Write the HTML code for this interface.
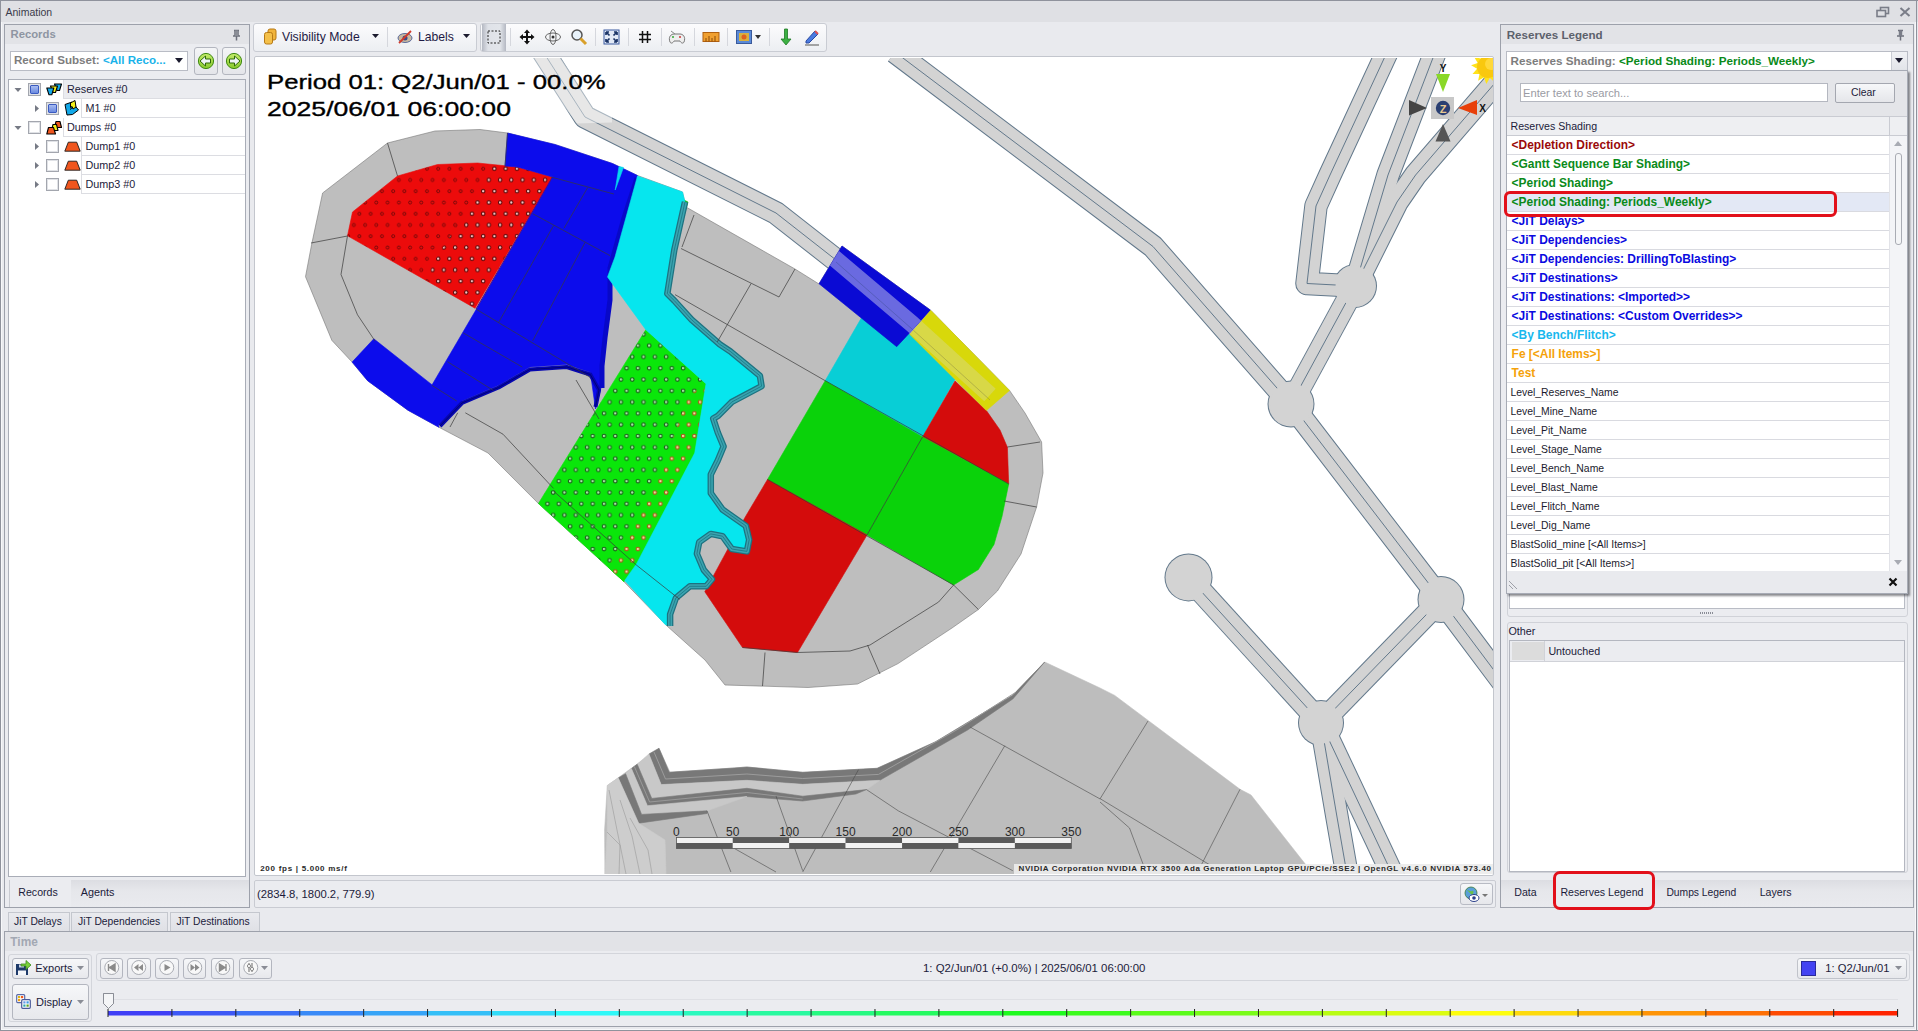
<!DOCTYPE html>
<html><head><meta charset="utf-8">
<style>
*{margin:0;padding:0;box-sizing:border-box}
html,body{width:1918px;height:1031px;overflow:hidden;background:#e9eaee;font-family:"Liberation Sans",sans-serif;color:#1b1b2e}
.a{position:absolute}
.t{position:absolute;white-space:nowrap;line-height:1;font-size:10.6px}
.b{font-weight:bold}
.box{position:absolute;border:1px solid #a7abb5}
</style></head><body>
<div class="a" style="left:0px;top:0px;width:1918px;height:1031px;background:#e9eaee"></div>
<div class="a" style="left:0px;top:0px;width:1918px;height:22px;background:#dfe0e4;border-top:1px solid #8f929c"></div>
<div class="a" style="left:1916px;top:0px;width:1px;height:1031px;background:#8f929c"></div>
<div class="t" style="left:5.5px;top:6.71px;font-size:10.5px;color:#3a3a4a;">Animation</div>
<svg class="a" style="left:1876px;top:6px" width="14" height="12" viewBox="0 0 14 12"><rect x="4.5" y="1.5" width="8" height="6" fill="none" stroke="#7a7d88" stroke-width="1.6"/><rect x="1" y="4.5" width="8.5" height="6" fill="#dfe0e4" stroke="#7a7d88" stroke-width="1.6"/></svg>
<svg class="a" style="left:1899px;top:7px" width="12" height="10" viewBox="0 0 12 10"><path d="M1.5 1 L10.5 9 M10.5 1 L1.5 9" stroke="#7a7d88" stroke-width="2"/></svg>
<div class="a" style="left:0px;top:0px;width:1px;height:1031px;background:#8f929c"></div>
<div class="a" style="left:1px;top:22px;width:1px;height:1008px;background:#f7f8fa"></div>
<div class="a" style="left:0px;top:1030px;width:1918px;height:1px;background:#8f929c"></div>
<div class="a" style="left:1px;top:1029px;width:1915px;height:1px;background:#f7f8fa"></div>
<div class="a" style="left:1915px;top:22px;width:1px;height:1008px;background:#f7f8fa"></div>
<div class="a" style="left:4px;top:24px;width:246px;height:884px;background:#ebecf0;border:1px solid #9da1ab"></div>
<div class="a" style="left:5px;top:25px;width:244px;height:19px;background:#e2e3e7"></div>
<div class="t" style="left:10.5px;top:28.73px;font-size:11.3px;color:#8e95a2;font-weight:bold;">Records</div>
<svg class="a" style="left:231px;top:29px" width="11" height="12" viewBox="0 0 11 12"><path d="M3 1.5h5M4 1.5v5.5M7 1.5v5.5M2 7h7M5.5 7v4.5" stroke="#6e717c" stroke-width="1.5" fill="none"/><rect x="4" y="1.5" width="3" height="5.5" fill="#8a8d96"/></svg>
<div class="a" style="left:10px;top:51px;width:178px;height:20px;background:#fff;border:1px solid #b9bcc5"></div>
<div class="t" style="left:14px;top:54px;font-size:11.6px;font-weight:bold;color:#7d7d7d">Record Subset: <span style="color:#19b3ea">&lt;All Reco...</span></div>
<svg class="a" style="left:175px;top:58px" width="8" height="5"><path d="M0 0h8L4 5z" fill="#1b1b2e"/></svg>
<div class="a" style="left:194px;top:47px;width:24px;height:28px;background:linear-gradient(#f4f5f7,#e4e5ea);border:1px solid #b3b6bf;border-radius:3px"></div>
<div class="a" style="left:222px;top:47px;width:24px;height:28px;background:linear-gradient(#f4f5f7,#e4e5ea);border:1px solid #b3b6bf;border-radius:3px"></div>
<svg class="a" style="left:197px;top:52px" width="18" height="18" viewBox="0 0 18 18"><defs><linearGradient id="gb" x1="0" y1="0" x2="0" y2="1"><stop offset="0" stop-color="#c4ec6a"/><stop offset="1" stop-color="#86c92e"/></linearGradient></defs><circle cx="9" cy="9" r="7.6" fill="url(#gb)" stroke="#3f8a12" stroke-width="1"/><path d="M3 9L8.5 4v3h5v4h-5v3z" fill="#eef4f8" stroke="#2f6a0a" stroke-width="1"/></svg>
<svg class="a" style="left:225px;top:52px" width="18" height="18" viewBox="0 0 18 18"><circle cx="9" cy="9" r="7.6" fill="url(#gb)" stroke="#3f8a12" stroke-width="1"/><path d="M15 9L9.5 4v3h-5v4h5v3z" fill="#eef4f8" stroke="#2f6a0a" stroke-width="1"/></svg>
<div class="a" style="left:8px;top:79px;width:238px;height:798px;background:#fff;border:1px solid #a9adb7"></div>
<div class="a" style="left:63px;top:80px;width:182px;height:19px;background:#ebecf0;border-left:1px solid #dcdde2;border-bottom:1px solid #dcdde2"></div>
<svg class="a" style="left:13.5px;top:87px" width="8" height="6"><path d="M0.5 1h7L4 5z" fill="#767a85"/></svg>
<div class="a" style="left:28px;top:83px;width:13px;height:13px;background:#fff;border:1px solid #a3a6ae;box-shadow:inset 0 0 0 1px #e0e2e6"></div>
<div class="a" style="left:30px;top:85px;width:9px;height:9px;background:linear-gradient(#a8bcf0,#6a8ae0);border:1px solid #3a5ac0;border-radius:1px"></div>
<svg class="a" style="left:46px;top:83px" width="17" height="13" viewBox="0 0 17 13"><g stroke="#000" stroke-width="1.1" stroke-linejoin="round"><path d="M8.5 1h7l-2 6.5h-2.5z" fill="#12a8e8"/><path d="M4.5 3h7l-2 6.5H7z" fill="#f4f01a"/><path d="M0.8 5h7l-2 6.8H3z" fill="#12a8e8"/></g></svg>
<div class="t" style="left:67.0px;top:83.86px;font-size:10.8px;color:#1b1b3a;">Reserves #0</div>
<div class="a" style="left:81px;top:99px;width:164px;height:19px;background:#fff;border-left:1px solid #dcdde2;border-bottom:1px solid #dcdde2"></div>
<svg class="a" style="left:33.8px;top:104px" width="6" height="9"><path d="M1 1v7l4-3.5z" fill="#767a85"/></svg>
<div class="a" style="left:46px;top:102px;width:13px;height:13px;background:#fff;border:1px solid #a3a6ae;box-shadow:inset 0 0 0 1px #e0e2e6"></div>
<div class="a" style="left:48px;top:104px;width:9px;height:9px;background:linear-gradient(#a8bcf0,#6a8ae0);border:1px solid #3a5ac0;border-radius:1px"></div>
<svg class="a" style="left:64px;top:100px" width="16" height="16" viewBox="0 0 16 16"><g stroke="#000" stroke-width="1" stroke-linejoin="round"><path d="M1 4.5l7-2.5 6.5 8-6 4.5-5.5 0.5z" fill="#12a8e8"/><path d="M6.5 3l4.5-2.5 1 6.5-3 2-1-2.5-1.5 1z" fill="#f4f01a"/><path d="M6 9.5l3-2.5" fill="none"/></g></svg>
<div class="t" style="left:85.5px;top:102.86px;font-size:10.8px;color:#1b1b3a;">M1 #0</div>
<div class="a" style="left:63px;top:118px;width:182px;height:19px;background:#fff;border-left:1px solid #dcdde2;border-bottom:1px solid #dcdde2"></div>
<svg class="a" style="left:13.5px;top:125px" width="8" height="6"><path d="M0.5 1h7L4 5z" fill="#767a85"/></svg>
<div class="a" style="left:28px;top:121px;width:13px;height:13px;background:#fff;border:1px solid #a3a6ae;box-shadow:inset 0 0 0 1px #e0e2e6"></div>
<svg class="a" style="left:46px;top:120px" width="17" height="15" viewBox="0 0 17 15"><g stroke="#000" stroke-width="1.1" stroke-linejoin="round"><path d="M10 1.5h4l1.5 6h-7z" fill="#f0561e"/><path d="M7 4.5h3.5l1.5 6H5.5z" fill="#f4f01a"/><path d="M2.5 7.5h5l2 6.5H0.8z" fill="#f0561e"/></g></svg>
<div class="t" style="left:67.0px;top:121.86px;font-size:10.8px;color:#1b1b3a;">Dumps #0</div>
<div class="a" style="left:81px;top:137px;width:164px;height:19px;background:#fff;border-left:1px solid #dcdde2;border-bottom:1px solid #dcdde2"></div>
<svg class="a" style="left:33.8px;top:142px" width="6" height="9"><path d="M1 1v7l4-3.5z" fill="#767a85"/></svg>
<div class="a" style="left:46px;top:140px;width:13px;height:13px;background:#fff;border:1px solid #a3a6ae;box-shadow:inset 0 0 0 1px #e0e2e6"></div>
<svg class="a" style="left:64px;top:141px" width="17" height="11" viewBox="0 0 17 11"><path d="M0.8 10.2l3.5-9h8.4l3.5 9z" fill="#f0561e" stroke="#1a1a1a" stroke-width="0.9"/></svg>
<div class="t" style="left:85.5px;top:140.86px;font-size:10.8px;color:#1b1b3a;">Dump1 #0</div>
<div class="a" style="left:81px;top:156px;width:164px;height:19px;background:#fff;border-left:1px solid #dcdde2;border-bottom:1px solid #dcdde2"></div>
<svg class="a" style="left:33.8px;top:161px" width="6" height="9"><path d="M1 1v7l4-3.5z" fill="#767a85"/></svg>
<div class="a" style="left:46px;top:159px;width:13px;height:13px;background:#fff;border:1px solid #a3a6ae;box-shadow:inset 0 0 0 1px #e0e2e6"></div>
<svg class="a" style="left:64px;top:160px" width="17" height="11" viewBox="0 0 17 11"><path d="M0.8 10.2l3.5-9h8.4l3.5 9z" fill="#f0561e" stroke="#1a1a1a" stroke-width="0.9"/></svg>
<div class="t" style="left:85.5px;top:159.86px;font-size:10.8px;color:#1b1b3a;">Dump2 #0</div>
<div class="a" style="left:81px;top:175px;width:164px;height:19px;background:#fff;border-left:1px solid #dcdde2;border-bottom:1px solid #dcdde2"></div>
<svg class="a" style="left:33.8px;top:180px" width="6" height="9"><path d="M1 1v7l4-3.5z" fill="#767a85"/></svg>
<div class="a" style="left:46px;top:178px;width:13px;height:13px;background:#fff;border:1px solid #a3a6ae;box-shadow:inset 0 0 0 1px #e0e2e6"></div>
<svg class="a" style="left:64px;top:179px" width="17" height="11" viewBox="0 0 17 11"><path d="M0.8 10.2l3.5-9h8.4l3.5 9z" fill="#f0561e" stroke="#1a1a1a" stroke-width="0.9"/></svg>
<div class="t" style="left:85.5px;top:178.86px;font-size:10.8px;color:#1b1b3a;">Dump3 #0</div>
<div class="a" style="left:9px;top:880px;width:62px;height:27px;background:#ebecf0;border-left:1px solid #c9cbd1"></div>
<div class="a" style="left:71px;top:880px;width:178px;height:27px;background:linear-gradient(#dcdde2,#e6e7eb 40%,#e9eaee)"></div>
<div class="t" style="left:18.3px;top:887.03px;font-size:10.6px;color:#1b1b3a;">Records</div>
<div class="t" style="left:80.8px;top:886.86px;font-size:10.8px;color:#1b1b3a;">Agents</div>
<div class="a" style="left:253px;top:23px;width:224px;height:29px;background:linear-gradient(#fcfcfd,#eceef2);border:1px solid #c9ccd3;border-radius:3px"></div>
<div class="a" style="left:480px;top:23px;width:347px;height:29px;background:linear-gradient(#fcfcfd,#eceef2);border:1px solid #c9ccd3;border-radius:3px"></div>
<svg class="a" style="left:263px;top:28px" width="15" height="17" viewBox="0 0 15 17"><rect x="5" y="1" width="8" height="11" rx="2" fill="#f0b43c" stroke="#b77a16"/><rect x="1.5" y="4.5" width="8" height="11.5" rx="2" fill="#f4c04a" stroke="#b77a16"/></svg>
<div class="t" style="left:282.0px;top:30.67px;font-size:12.2px;color:#1e1a44;">Visibility Mode</div>
<svg class="a" style="left:372px;top:34px" width="7" height="4"><path d="M0 0h7L3.5 4z" fill="#1b1b2e"/></svg>
<div class="a" style="left:387px;top:27px;width:1px;height:20px;background:#d5d7dd"></div>
<svg class="a" style="left:397px;top:30px" width="17" height="14" viewBox="0 0 17 14"><ellipse cx="8" cy="8" rx="7" ry="4.5" fill="#c9b9a0" stroke="#5a6a9a"/><circle cx="8" cy="8" r="2.5" fill="#3a4a8a"/><path d="M2 13L14 1" stroke="#d03a2a" stroke-width="1.8"/></svg>
<div class="t" style="left:418.0px;top:30.67px;font-size:12.2px;color:#1e1a44;">Labels</div>
<svg class="a" style="left:463px;top:34px" width="7" height="4"><path d="M0 0h7L3.5 4z" fill="#1b1b2e"/></svg>
<div class="a" style="left:482px;top:24px;width:24px;height:27px;background:linear-gradient(90deg,#b4b8c2,#dfe2e8 25%,#e2e5ea 75%,#b4b8c2)"></div>
<div class="a" style="left:510px;top:28px;width:1px;height:18px;background:#d5d7dd"></div>
<svg class="a" style="left:487px;top:30px" width="14" height="14"><rect x="1" y="1" width="12" height="12" fill="none" stroke="#222" stroke-dasharray="2,1.5"/></svg>
<svg class="a" style="left:519px;top:29px" width="16" height="16" viewBox="0 0 16 16"><path d="M8 0.5L11 4H9v3h3V5l3.5 3L12 11V9H9v3h2l-3 3.5L5 12h2V9H4v2L0.5 8 4 5v2h3V4H5z" fill="#111"/></svg>
<svg class="a" style="left:544px;top:28px" width="18" height="18" viewBox="0 0 18 18"><ellipse cx="9" cy="9" rx="7.5" ry="4" fill="none" stroke="#666" stroke-width="1"/><ellipse cx="9" cy="9" rx="3" ry="7.5" fill="none" stroke="#666" stroke-width="1"/><circle cx="9" cy="9" r="1.5" fill="#333"/></svg>
<svg class="a" style="left:570px;top:28px" width="18" height="18" viewBox="0 0 18 18"><circle cx="7" cy="7" r="5" fill="#e8f2fa" stroke="#555" stroke-width="1.5"/><path d="M10.5 10.5L16 16" stroke="#d9a02a" stroke-width="3"/></svg>
<div class="a" style="left:595px;top:28px;width:1px;height:18px;background:#d5d7dd"></div>
<svg class="a" style="left:603px;top:29px" width="17" height="16" viewBox="0 0 17 16"><rect x="1" y="1" width="15" height="14" fill="#e2e9f6" stroke="#3a5aa0"/><path d="M3 3l3.5 3.5M3 3h3M3 3v3M14 3l-3.5 3.5M14 3h-3M14 3v3M3 13l3.5-3.5M3 13h3M3 13v-3M14 13l-3.5-3.5M14 13h-3M14 13v-3" stroke="#1a3366" stroke-width="1.7" fill="none"/></svg>
<div class="a" style="left:628px;top:28px;width:1px;height:18px;background:#d5d7dd"></div>
<svg class="a" style="left:638px;top:30px" width="14" height="14" viewBox="0 0 14 14"><path d="M4.5 1v12M9.5 1v12M1 4.5h12M1 9.5h12" stroke="#111" stroke-width="1.5"/></svg>
<div class="a" style="left:661px;top:28px;width:1px;height:18px;background:#d5d7dd"></div>
<svg class="a" style="left:668px;top:29px" width="18" height="16" viewBox="0 0 18 16"><path d="M2 13C0 8 3 5 6 5h6c3 0 6 3 4 8-1 2-3 1-4-1H6c-1 2-3 3-4 1z" fill="#eee" stroke="#777"/><circle cx="5" cy="8" r="1" fill="#3a3"/><circle cx="12" cy="8" r="1" fill="#c33"/><path d="M3 2l4 3" stroke="#888"/></svg>
<div class="a" style="left:694px;top:28px;width:1px;height:18px;background:#d5d7dd"></div>
<svg class="a" style="left:702px;top:31px" width="18" height="12" viewBox="0 0 18 12"><rect x="1" y="1.5" width="16" height="9" fill="#f0a030" stroke="#b06010"/><path d="M4 7v3.5M7 5v5.5M10 7v3.5M13 5v5.5" stroke="#8a4a08"/></svg>
<div class="a" style="left:727px;top:28px;width:1px;height:18px;background:#d5d7dd"></div>
<svg class="a" style="left:736px;top:30px" width="16" height="14" viewBox="0 0 16 14"><rect x="0.5" y="0.5" width="15" height="13" fill="#5a8ad8" stroke="#3a5a9a"/><rect x="3" y="3" width="10" height="8" fill="#d8b040"/><circle cx="8" cy="7" r="2.5" fill="#e06020"/></svg>
<svg class="a" style="left:755px;top:35px" width="6" height="4"><path d="M0 0h6L3 4z" fill="#333"/></svg>
<div class="a" style="left:769px;top:28px;width:1px;height:18px;background:#d5d7dd"></div>
<svg class="a" style="left:780px;top:28px" width="12" height="18" viewBox="0 0 12 18"><path d="M4.5 1h3v10h3.5L6 17 1 11h3.5z" fill="#3cb043" stroke="#1e7a24" stroke-width="0.8"/></svg>
<svg class="a" style="left:803px;top:28px" width="18" height="18" viewBox="0 0 18 18"><path d="M3 13L12 3l3 3-9 9H3z" fill="#4a7adf" stroke="#2a4aa0"/><path d="M12 3l3 3" stroke="#e05050" stroke-width="2"/><path d="M2 17h14" stroke="#888" stroke-width="1.5"/></svg>
<div class="a" style="left:254px;top:56px;width:1240px;height:820px;background:#fff;border:1px solid #c3c6cd;border-radius:2px"></div>
<svg class="a" style="left:256px;top:58px" width="1237" height="816" viewBox="256 58 1237 816"><defs><pattern id="pr" x="7.7" y="8.25" width="11.25" height="22.5" patternUnits="userSpaceOnUse"><circle cx="3" cy="3" r="1.5" fill="none" stroke="#6a0808" stroke-width="0.9"/><circle cx="8.625" cy="14.25" r="1.5" fill="none" stroke="#6a0808" stroke-width="0.9"/></pattern><pattern id="prw" x="7.7" y="8.25" width="11.25" height="22.5" patternUnits="userSpaceOnUse"><circle cx="3" cy="3" r="1.7" fill="#f4c8c8" stroke="#5a0606" stroke-width="1"/><circle cx="8.625" cy="14.25" r="1.7" fill="#f4c8c8" stroke="#5a0606" stroke-width="1"/></pattern><pattern id="pg" x="2.1" y="3.6" width="11.3" height="22.6" patternUnits="userSpaceOnUse"><circle cx="3" cy="3" r="1.8" fill="#a8e8a8" stroke="#1a5a1a" stroke-width="1.1"/><circle cx="8.65" cy="14.3" r="1.8" fill="#a8e8a8" stroke="#1a5a1a" stroke-width="1.1"/></pattern><pattern id="po" x="2.1" y="3.6" width="11.3" height="22.6" patternUnits="userSpaceOnUse"><circle cx="3" cy="3" r="1.8" fill="#e8e0a0" stroke="#b0501a" stroke-width="1.1"/><circle cx="8.65" cy="14.3" r="1.8" fill="#e8e0a0" stroke="#b0501a" stroke-width="1.1"/></pattern><clipPath id="gor"><polygon points="706,383.8 694.7,453 636.7,565.3 624,581.7 606,572 614,556 668,452 688,396"/></clipPath><clipPath id="redw"><polygon points="493,160 570,160 570,330 420,330 432,265 470,205"/></clipPath></defs><polyline points="542.0,50.0 585.0,117.0 776.0,213.0 836.0,260.0 912.0,330.0 990.0,400.0" fill="none" stroke="#62788b" stroke-width="23.5" stroke-linejoin="round"/><polyline points="895.0,52.0 1153.0,246.5 1291.0,404.0" fill="none" stroke="#62788b" stroke-width="23.5" stroke-linejoin="round"/><polyline points="1291.0,404.0 1441.0,599.5 1505.0,685.0" fill="none" stroke="#62788b" stroke-width="23.5" stroke-linejoin="round"/><polyline points="1441.0,599.5 1321.0,723.0" fill="none" stroke="#62788b" stroke-width="23.5" stroke-linejoin="round"/><polyline points="1321.0,723.0 1188.5,577.4" fill="none" stroke="#62788b" stroke-width="23.5" stroke-linejoin="round"/><polyline points="1321.0,723.0 1337.0,817.0 1348.0,880.0" fill="none" stroke="#62788b" stroke-width="23.5" stroke-linejoin="round"/><polyline points="1321.0,723.0 1395.0,880.0" fill="none" stroke="#62788b" stroke-width="23.5" stroke-linejoin="round"/><polyline points="1291.0,404.0 1355.0,286.0" fill="none" stroke="#62788b" stroke-width="23.5" stroke-linejoin="round"/><polyline points="1388.0,50.0 1330.0,175.0 1316.0,206.0 1307.0,283.5 1355.0,286.0" fill="none" stroke="#62788b" stroke-width="23.5" stroke-linejoin="round"/><polyline points="1436.0,50.0 1388.0,175.0 1355.0,286.0" fill="none" stroke="#62788b" stroke-width="23.5" stroke-linejoin="round"/><polyline points="1505.0,71.4 1415.6,175.0 1397.0,202.0 1355.0,286.0" fill="none" stroke="#62788b" stroke-width="23.5" stroke-linejoin="round"/><circle cx="1291" cy="404" r="23.5" fill="#62788b"/><circle cx="1441" cy="599.5" r="23.5" fill="#62788b"/><circle cx="1321" cy="723" r="23" fill="#62788b"/><circle cx="1188.5" cy="577.4" r="24" fill="#62788b"/><circle cx="1355" cy="286" r="22" fill="#62788b"/><polyline points="542.0,50.0 585.0,117.0 776.0,213.0 836.0,260.0 912.0,330.0 990.0,400.0" fill="none" stroke="#d3d3d3" stroke-width="21.5" stroke-linejoin="round"/><polyline points="895.0,52.0 1153.0,246.5 1291.0,404.0" fill="none" stroke="#d3d3d3" stroke-width="21.5" stroke-linejoin="round"/><polyline points="1291.0,404.0 1441.0,599.5 1505.0,685.0" fill="none" stroke="#d3d3d3" stroke-width="21.5" stroke-linejoin="round"/><polyline points="1441.0,599.5 1321.0,723.0" fill="none" stroke="#d3d3d3" stroke-width="21.5" stroke-linejoin="round"/><polyline points="1321.0,723.0 1188.5,577.4" fill="none" stroke="#d3d3d3" stroke-width="21.5" stroke-linejoin="round"/><polyline points="1321.0,723.0 1337.0,817.0 1348.0,880.0" fill="none" stroke="#d3d3d3" stroke-width="21.5" stroke-linejoin="round"/><polyline points="1321.0,723.0 1395.0,880.0" fill="none" stroke="#d3d3d3" stroke-width="21.5" stroke-linejoin="round"/><polyline points="1291.0,404.0 1355.0,286.0" fill="none" stroke="#d3d3d3" stroke-width="21.5" stroke-linejoin="round"/><polyline points="1388.0,50.0 1330.0,175.0 1316.0,206.0 1307.0,283.5 1355.0,286.0" fill="none" stroke="#d3d3d3" stroke-width="21.5" stroke-linejoin="round"/><polyline points="1436.0,50.0 1388.0,175.0 1355.0,286.0" fill="none" stroke="#d3d3d3" stroke-width="21.5" stroke-linejoin="round"/><polyline points="1505.0,71.4 1415.6,175.0 1397.0,202.0 1355.0,286.0" fill="none" stroke="#d3d3d3" stroke-width="21.5" stroke-linejoin="round"/><circle cx="1291" cy="404" r="22.5" fill="#d3d3d3"/><circle cx="1441" cy="599.5" r="22.5" fill="#d3d3d3"/><circle cx="1321" cy="723" r="22" fill="#d3d3d3"/><circle cx="1188.5" cy="577.4" r="23" fill="#d3d3d3"/><circle cx="1355" cy="286" r="21" fill="#d3d3d3"/><polyline points="542.0,50.0 585.0,117.0 776.0,213.0 836.0,260.0 912.0,330.0 990.0,400.0" fill="none" stroke="#62788b" stroke-width="1" /><polyline points="895.0,52.0 1153.0,246.5 1291.0,404.0" fill="none" stroke="#62788b" stroke-width="1" /><polyline points="1291.0,404.0 1441.0,599.5 1505.0,685.0" fill="none" stroke="#62788b" stroke-width="1" /><polyline points="1441.0,599.5 1321.0,723.0" fill="none" stroke="#62788b" stroke-width="1" /><polyline points="1321.0,723.0 1188.5,577.4" fill="none" stroke="#62788b" stroke-width="1" /><polyline points="1321.0,723.0 1337.0,817.0 1348.0,880.0" fill="none" stroke="#62788b" stroke-width="1" /><polyline points="1321.0,723.0 1395.0,880.0" fill="none" stroke="#62788b" stroke-width="1" /><polyline points="1291.0,404.0 1355.0,286.0" fill="none" stroke="#62788b" stroke-width="1" /><polyline points="1388.0,50.0 1330.0,175.0 1316.0,206.0 1307.0,283.5 1355.0,286.0" fill="none" stroke="#62788b" stroke-width="1" /><polyline points="1436.0,50.0 1388.0,175.0 1355.0,286.0" fill="none" stroke="#62788b" stroke-width="1" /><polyline points="1505.0,71.4 1415.6,175.0 1397.0,202.0 1355.0,286.0" fill="none" stroke="#62788b" stroke-width="1" /><circle cx="1291" cy="404" r="21.0" fill="#d3d3d3"/><circle cx="1441" cy="599.5" r="21.0" fill="#d3d3d3"/><circle cx="1321" cy="723" r="20.5" fill="#d3d3d3"/><circle cx="1188.5" cy="577.4" r="21.5" fill="#d3d3d3"/><circle cx="1355" cy="286" r="19.5" fill="#d3d3d3"/><polygon points="527.0,57.0 560.0,57.0 594.0,108.0 612.0,116.0 612.0,122.5 577.0,123.5" fill="#ffffff" fill-opacity="0.45" stroke="none"/><polygon points="387.5,143.0 435.0,131.0 480.0,129.5 507.5,133.0 555.0,144.5 612.5,163.5 637.5,175.5 682.5,192.0 686.0,207.0 795.0,269.0 819.0,284.0 842.0,246.0 930.7,310.3 1009.5,390.4 1025.0,413.0 1041.6,442.0 1043.0,473.0 1036.6,507.0 1021.0,554.0 997.4,591.0 978.4,609.5 952.0,628.0 898.0,663.6 857.6,684.0 808.0,687.5 725.0,685.0 705.0,660.0 667.0,626.0 624.0,581.7 538.4,503.5 488.0,453.0 439.0,427.3 407.9,410.2 367.6,380.7 352.1,362.1 331.9,340.4 305.5,276.7 311.7,244.1 322.6,193.0" fill="#bebebe" stroke="#777" stroke-width="0.6"/><polygon points="397.5,176.0 437.5,164.5 477.5,163.0 517.5,167.0 552.5,177.0 475.0,308.2 347.5,235.8 352.5,212.0" fill="#ec0b0b"  stroke="#ec0b0b" stroke-width="0.6"/><polygon points="397.5,176.0 437.5,164.5 477.5,163.0 517.5,167.0 552.5,177.0 475.0,308.2 347.5,235.8 352.5,212.0" fill="url(#pr)" /><g clip-path="url(#redw)"><polygon points="397.5,176.0 437.5,164.5 477.5,163.0 517.5,167.0 552.5,177.0 475.0,308.2 347.5,235.8 352.5,212.0" fill="url(#prw)" /></g><polygon points="507.5,133.0 555.0,144.5 612.5,163.5 637.5,175.5 625.0,215.0 608.6,270.0 608.6,301.5 603.0,340.0 600.8,364.4 601.0,388.0 595.5,409.0 590.3,372.2 566.7,364.4 530.0,367.0 498.6,385.3 462.0,401.0 438.3,424.6 431.8,385.3 476.3,309.3 552.5,177.0 517.5,167.0 505.0,166.0" fill="#0c0cec"  stroke="#0c0cec" stroke-width="0.6"/><polyline points="637.0,178.0 624.0,218.0 610.0,268.0 610.0,300.0 605.0,338.0 602.0,366.0 602.0,388.0" fill="none" stroke="#0808c8" stroke-width="5" /><polygon points="352.1,362.1 373.8,338.8 432.8,385.4 462.0,401.0 438.3,424.6 439.0,427.3 407.9,410.2 367.6,380.7" fill="#0c0cec"  stroke="#0c0cec" stroke-width="0.6"/><polygon points="682.0,199.0 688.0,202.0 684.0,216.0 681.0,214.0" fill="#12b012"  stroke="#12b012" stroke-width="0.6"/><polyline points="476.0,309.0 552.5,177.0" fill="none" stroke="#5a0a7a" stroke-width="1" /><polyline points="440.0,426.0 462.0,403.0 498.6,387.5 530.0,369.5 566.7,367.0 590.3,374.5 599.0,390.0 595.5,407.0" fill="none" stroke="#0606b0" stroke-width="4" stroke-linejoin="round"/><polyline points="440.0,426.0 462.0,403.0 498.6,387.5 530.0,369.5 566.7,367.0 590.3,374.5 599.0,390.0 595.5,407.0" fill="none" stroke="#000060" stroke-width="0.7" /><polygon points="619.0,166.5 623.5,167.5 615.2,190.0" fill="#06d8ee"  stroke="#06d8ee" stroke-width="0.6"/><polygon points="645.8,329.7 706.0,383.8 694.7,453.0 636.7,565.3 624.0,581.7 538.4,503.5" fill="#0ae60a"  stroke="#0ae60a" stroke-width="0.6"/><polygon points="645.8,329.7 706.0,383.8 694.7,453.0 636.7,565.3 624.0,581.7 538.4,503.5" fill="url(#pg)" /><g clip-path="url(#gor)"><polygon points="645.8,329.7 706.0,383.8 694.7,453.0 636.7,565.3 624.0,581.7 538.4,503.5" fill="#0ae60a"  stroke="#0ae60a" stroke-width="0.6"/><polygon points="645.8,329.7 706.0,383.8 694.7,453.0 636.7,565.3 624.0,581.7 538.4,503.5" fill="url(#po)" /></g><polygon points="861.6,317.6 910.0,334.6 955.0,379.4 922.5,437.0 825.2,380.7" fill="#08ced6"  stroke="#08ced6" stroke-width="0.6"/><polygon points="955.0,381.0 986.4,410.6 1000.0,430.0 1007.4,447.3 1008.7,484.0 922.5,437.0" fill="#d40c0c"  stroke="#d40c0c" stroke-width="0.6"/><polygon points="825.2,380.7 922.5,437.0 867.0,535.0 767.5,479.5" fill="#0ad20a"  stroke="#0ad20a" stroke-width="0.6"/><polygon points="922.5,437.0 1008.7,484.0 1002.0,516.5 994.0,544.5 978.4,569.5 953.6,585.0 867.0,535.0" fill="#0ad20a"  stroke="#0ad20a" stroke-width="0.6"/><polygon points="767.5,479.5 867.0,535.0 797.5,652.5 742.5,647.5 704.8,591.7 745.0,517.4" fill="#d40c0c"  stroke="#d40c0c" stroke-width="0.6"/><polygon points="637.5,176.0 682.5,192.0 685.0,202.0 674.3,250.0 667.3,293.7 674.3,300.6 691.7,319.8 719.7,344.3 730.2,351.3 759.9,375.7 761.6,386.2 731.9,401.9 717.9,415.9 713.2,418.6 717.8,432.6 723.6,446.6 717.8,460.5 710.8,474.5 710.8,493.2 722.5,509.5 745.8,525.8 749.2,539.7 746.9,551.4 731.8,549.0 722.5,536.2 710.8,533.9 699.2,542.1 696.9,553.7 703.8,570.0 712.0,579.3 706.2,586.3 689.9,586.3 675.9,598.0 670.1,614.3 670.1,625.9 665.4,624.7 624.7,580.5 636.3,564.2 694.7,453.0 706.0,383.8 645.8,329.7 607.5,277.0 615.0,257.0" fill="#06e6ee"  stroke="#06e6ee" stroke-width="0.6"/><polyline points="685.0,202.0 674.3,250.0 667.3,293.7 674.3,300.6 691.7,319.8 719.7,344.3 730.2,351.3 759.9,375.7 761.6,386.2 731.9,401.9 717.9,415.9 713.2,418.6 717.8,432.6 723.6,446.6 717.8,460.5 710.8,474.5 710.8,493.2 722.5,509.5 745.8,525.8 749.2,539.7 746.9,551.4 731.8,549.0 722.5,536.2 710.8,533.9 699.2,542.1 696.9,553.7 703.8,570.0 712.0,579.3 706.2,586.3 689.9,586.3 675.9,598.0 670.1,614.3 670.1,625.9" fill="none" stroke="#1d7280" stroke-width="6.5" stroke-linejoin="round"/><polyline points="685.0,202.0 674.3,250.0 667.3,293.7 674.3,300.6 691.7,319.8 719.7,344.3 730.2,351.3 759.9,375.7 761.6,386.2 731.9,401.9 717.9,415.9 713.2,418.6 717.8,432.6 723.6,446.6 717.8,460.5 710.8,474.5 710.8,493.2 722.5,509.5 745.8,525.8 749.2,539.7 746.9,551.4 731.8,549.0 722.5,536.2 710.8,533.9 699.2,542.1 696.9,553.7 703.8,570.0 712.0,579.3 706.2,586.3 689.9,586.3 675.9,598.0 670.1,614.3 670.1,625.9" fill="none" stroke="#3aa4b0" stroke-width="4" stroke-linejoin="round"/><polyline points="685.0,202.0 674.3,250.0 667.3,293.7 674.3,300.6 691.7,319.8 719.7,344.3 730.2,351.3 759.9,375.7 761.6,386.2 731.9,401.9 717.9,415.9 713.2,418.6 717.8,432.6 723.6,446.6 717.8,460.5 710.8,474.5 710.8,493.2 722.5,509.5 745.8,525.8 749.2,539.7 746.9,551.4 731.8,549.0 722.5,536.2 710.8,533.9 699.2,542.1 696.9,553.7 703.8,570.0 712.0,579.3 706.2,586.3 689.9,586.3 675.9,598.0 670.1,614.3 670.1,625.9" fill="none" stroke="#1d7a88" stroke-width="0.9" stroke-linejoin="round"/><polygon points="842.0,246.0 930.7,310.3 896.7,346.7 819.0,283.7" fill="#0a0ad4"  stroke="#0a0ad4" stroke-width="0.6"/><polygon points="930.7,310.3 1009.5,390.4 986.4,410.6 910.0,334.6" fill="#d8d80a"  stroke="#d8d80a" stroke-width="0.6"/><clipPath id="stripB"><polygon points="842,246 930.7,310.3 896.7,346.7 819,283.7"/></clipPath><clipPath id="stripY"><polygon points="930.7,310.3 1009.5,390.4 986.4,410.6 910,334.6"/></clipPath><g clip-path="url(#stripB)"><polyline points="833.0,257.0 912.0,324.0 990.0,395.0" fill="none" stroke="#e0e0f0" stroke-width="17" stroke-opacity="0.45"/><polyline points="836.0,262.0 912.0,329.0 990.0,400.0" fill="none" stroke="#3a4a8a" stroke-width="0.8" stroke-opacity="0.5"/></g><g clip-path="url(#stripY)"><polyline points="833.0,257.0 912.0,324.0 990.0,395.0" fill="none" stroke="#d8d8d8" stroke-width="17" stroke-opacity="0.3"/><polyline points="836.0,262.0 912.0,329.0 990.0,400.0" fill="none" stroke="#7a7a40" stroke-width="0.8" stroke-opacity="0.5"/></g><polyline points="387.5,143.0 397.5,176.0" fill="none" stroke="#3a3a3a" stroke-width="0.7" /><polyline points="311.0,243.0 347.5,236.0" fill="none" stroke="#3a3a3a" stroke-width="0.7" /><polyline points="347.5,235.8 341.0,274.5 357.5,314.8 375.0,341.0" fill="none" stroke="#3a3a3a" stroke-width="0.7" /><polyline points="450.0,427.0 457.7,412.8" fill="none" stroke="#3a3a3a" stroke-width="0.7" /><polyline points="465.3,412.8 503.0,434.2 553.5,488.4" fill="none" stroke="#3a3a3a" stroke-width="0.7" /><polyline points="576.0,380.0 599.0,419.0" fill="none" stroke="#3a3a3a" stroke-width="0.7" /><polyline points="553.5,491.0 636.7,565.3 679.6,599.3" fill="none" stroke="#3a3a3a" stroke-width="0.7" /><polyline points="694.0,215.0 682.0,247.0" fill="none" stroke="#3a3a3a" stroke-width="0.7" /><polyline points="681.0,248.5 779.0,297.0 795.0,269.0" fill="none" stroke="#3a3a3a" stroke-width="0.7" /><polyline points="675.0,294.6 825.2,380.7" fill="none" stroke="#3a3a3a" stroke-width="0.7" /><polyline points="751.0,283.7 717.3,341.9" fill="none" stroke="#3a3a3a" stroke-width="0.7" /><polyline points="742.5,647.5 797.5,652.5 850.0,651.0 870.0,645.0 938.6,602.0 953.6,585.0" fill="none" stroke="#3a3a3a" stroke-width="0.7" /><polyline points="922.5,437.0 867.0,535.0" fill="none" stroke="#3a3a3a" stroke-width="0.7" /><polyline points="825.2,380.7 1008.7,484.0" fill="none" stroke="#3a3a3a" stroke-width="0.7" /><polyline points="767.5,479.5 953.6,585.0" fill="none" stroke="#3a3a3a" stroke-width="0.7" /><polyline points="765.0,652.5 762.5,686.0" fill="none" stroke="#3a3a3a" stroke-width="0.7" /><polyline points="867.5,645.0 880.0,674.0" fill="none" stroke="#3a3a3a" stroke-width="0.7" /><polyline points="953.6,585.0 978.4,609.5" fill="none" stroke="#3a3a3a" stroke-width="0.7" /><polyline points="1004.0,501.0 1036.6,507.0" fill="none" stroke="#3a3a3a" stroke-width="0.7" /><polyline points="1007.5,447.0 1040.0,442.0" fill="none" stroke="#3a3a3a" stroke-width="0.7" /><polyline points="505.0,166.0 507.5,133.0" fill="none" stroke="#3a3a3a" stroke-width="0.7" /><polyline points="551.0,177.0 613.9,194.0" fill="none" stroke="#3a3a3a" stroke-width="0.7" /><polyline points="587.7,187.5 564.1,228.1" fill="none" stroke="#3a3a3a" stroke-width="0.7" /><polyline points="532.7,213.7 610.0,255.6" fill="none" stroke="#3a3a3a" stroke-width="0.7" /><polyline points="553.6,225.5 498.6,322.4" fill="none" stroke="#3a3a3a" stroke-width="0.7" /><polyline points="585.0,242.5 532.7,340.8" fill="none" stroke="#3a3a3a" stroke-width="0.7" /><polyline points="476.3,309.3 590.3,377.4" fill="none" stroke="#3a3a3a" stroke-width="0.7" /><polyline points="463.2,332.9 522.2,367.0" fill="none" stroke="#3a3a3a" stroke-width="0.7" /><polyline points="447.5,361.7 493.4,390.5" fill="none" stroke="#3a3a3a" stroke-width="0.7" /><polyline points="431.8,385.3 456.7,401.0" fill="none" stroke="#3a3a3a" stroke-width="0.7" /><polygon points="607.3,785.6 659.0,748.4 670.0,772.3 747.0,767.0 802.7,772.3 877.0,768.3 935.7,741.7 1012.8,695.2 1044.7,662.0 1100.0,688.0 1114.7,695.4 1240.0,789.3 1251.0,795.0 1306.0,865.0 1312.0,880.0 605.0,880.0 604.6,830.0" fill="#bdbdbd"  stroke="#bdbdbd" stroke-width="0.6"/><polygon points="648.9,754.0 659.0,748.2 669.2,772.2 734.7,768.0 746.9,767.0 802.7,772.3 877.2,768.3 935.7,741.7 1012.8,695.2 1044.7,662.0 1012.8,699.0 967.6,730.0 879.8,780.3 802.7,784.3 746.9,780.3 661.2,784.6" fill="#787878"  stroke="#787878" stroke-width="0.6"/><polyline points="654.0,752.0 665.5,779.0 746.9,774.0 802.7,778.5 878.5,774.4 956.9,729.8 1015.4,692.5" fill="none" stroke="#9c9c9c" stroke-width="1" /><polygon points="648.9,754.0 661.2,784.6 746.9,780.3 802.7,784.3 879.8,780.3 866.5,789.6 802.7,796.2 746.9,788.3 651.8,798.4 637.2,764.2" fill="#c8c8c8"  stroke="#c8c8c8" stroke-width="0.6"/><polygon points="637.2,764.2 651.8,798.4 746.9,788.3 802.7,796.2 866.5,789.6 855.9,794.0 802.7,801.0 746.9,796.5 734.7,798.4 647.4,805.7 631.4,768.6" fill="#787878"  stroke="#787878" stroke-width="0.6"/><polyline points="634.3,766.4 649.6,802.0 746.9,792.5 802.7,799.0" fill="none" stroke="#9c9c9c" stroke-width="0.9" /><polygon points="631.4,768.6 647.4,805.7 746.9,796.5 707.0,810.8 641.6,814.4 625.6,773.7" fill="#c8c8c8"  stroke="#c8c8c8" stroke-width="0.6"/><polygon points="618.3,778.0 625.6,773.7 641.6,814.4 707.0,810.8 707.0,813.5 638.7,823.2" fill="#787878"  stroke="#787878" stroke-width="0.6"/><polygon points="607.4,785.3 618.3,778.0 638.7,823.2 665.0,840.0 666.0,874.0 605.0,874.0 607.3,830.8" fill="#cdcdcd"  stroke="#cdcdcd" stroke-width="0.6"/><polyline points="609.0,790.0 617.0,830.0 626.0,874.0" fill="none" stroke="#9a9a9a" stroke-width="0.6" /><polyline points="620.0,800.0 632.0,836.0 640.0,874.0" fill="none" stroke="#9a9a9a" stroke-width="0.6" /><polyline points="630.0,818.0 648.0,850.0 652.0,874.0" fill="none" stroke="#9a9a9a" stroke-width="0.6" /><polyline points="607.0,832.0 620.0,845.0 619.0,874.0" fill="none" stroke="#9a9a9a" stroke-width="0.6" /><polyline points="858.5,769.6 802.7,872.0" fill="none" stroke="#4a4a4a" stroke-width="0.6" /><polyline points="1004.8,745.7 930.3,872.0" fill="none" stroke="#4a4a4a" stroke-width="0.6" /><polyline points="970.2,727.1 1100.0,798.9 1148.0,721.0" fill="none" stroke="#4a4a4a" stroke-width="0.6" /><polyline points="866.5,789.6 898.4,810.9 1012.8,870.7" fill="none" stroke="#4a4a4a" stroke-width="0.6" /><polyline points="707.0,810.9 730.9,872.0" fill="none" stroke="#4a4a4a" stroke-width="0.6" /><polyline points="776.0,796.0 802.7,870.7" fill="none" stroke="#4a4a4a" stroke-width="0.6" /><polyline points="733.6,848.0 776.0,872.0" fill="none" stroke="#4a4a4a" stroke-width="0.6" /><polyline points="1240.0,789.3 1197.7,872.0" fill="none" stroke="#4a4a4a" stroke-width="0.6" /><polyline points="1100.0,802.0 1129.5,828.0 1146.0,872.0" fill="none" stroke="#4a4a4a" stroke-width="0.6" /><polyline points="1100.0,798.6 1221.6,872.0" fill="none" stroke="#4a4a4a" stroke-width="0.6" /><rect x="676.4" y="837.5" width="56.4" height="5.5" fill="#f2f2f2"/><rect x="676.4" y="843" width="56.4" height="5.5" fill="#5a5a5a"/><rect x="732.8" y="837.5" width="56.4" height="5.5" fill="#5a5a5a"/><rect x="732.8" y="843" width="56.4" height="5.5" fill="#f2f2f2"/><rect x="789.2" y="837.5" width="56.4" height="5.5" fill="#f2f2f2"/><rect x="789.2" y="843" width="56.4" height="5.5" fill="#5a5a5a"/><rect x="845.6" y="837.5" width="56.4" height="5.5" fill="#5a5a5a"/><rect x="845.6" y="843" width="56.4" height="5.5" fill="#f2f2f2"/><rect x="902.1" y="837.5" width="56.4" height="5.5" fill="#f2f2f2"/><rect x="902.1" y="843" width="56.4" height="5.5" fill="#5a5a5a"/><rect x="958.5" y="837.5" width="56.4" height="5.5" fill="#5a5a5a"/><rect x="958.5" y="843" width="56.4" height="5.5" fill="#f2f2f2"/><rect x="1014.9" y="837.5" width="56.4" height="5.5" fill="#f2f2f2"/><rect x="1014.9" y="843" width="56.4" height="5.5" fill="#5a5a5a"/><rect x="676.4" y="837.5" width="394.9" height="11" fill="none" stroke="#555" stroke-width="0.8"/><text x="676.4" y="836" font-size="12" fill="#2a2a2a" text-anchor="middle" font-family="Liberation Sans">0</text><text x="732.8" y="836" font-size="12" fill="#2a2a2a" text-anchor="middle" font-family="Liberation Sans">50</text><text x="789.2" y="836" font-size="12" fill="#2a2a2a" text-anchor="middle" font-family="Liberation Sans">100</text><text x="845.6" y="836" font-size="12" fill="#2a2a2a" text-anchor="middle" font-family="Liberation Sans">150</text><text x="902.1" y="836" font-size="12" fill="#2a2a2a" text-anchor="middle" font-family="Liberation Sans">200</text><text x="958.5" y="836" font-size="12" fill="#2a2a2a" text-anchor="middle" font-family="Liberation Sans">250</text><text x="1014.9" y="836" font-size="12" fill="#2a2a2a" text-anchor="middle" font-family="Liberation Sans">300</text><text x="1071.3" y="836" font-size="12" fill="#2a2a2a" text-anchor="middle" font-family="Liberation Sans">350</text><g><polygon points="1504.9,68.7 1498.3,70.9 1501.8,76.9 1495.0,75.5 1495.0,82.5 1489.8,77.9 1486.3,83.9 1484.1,77.3 1478.1,80.8 1479.5,74.0 1472.5,74.0 1477.1,68.8 1471.1,65.3 1477.7,63.1 1474.2,57.1 1481.0,58.5 1481.0,51.5 1486.2,56.1 1489.7,50.1 1491.9,56.7 1497.9,53.2 1496.5,60.0 1503.5,60.0 1498.9,65.2" fill="#ffe21a"/><circle cx="1488" cy="67" r="11" fill="#f9c80e"/><circle cx="1491" cy="64" r="6" fill="#ffd83a"/><rect x="1431" y="97" width="23" height="22" fill="#c8c8c8"/><circle cx="1443" cy="108" r="7.2" fill="#2a3f72"/><text x="1443" y="112.5" font-size="11" font-weight="bold" fill="#e8c890" text-anchor="middle" font-family="Liberation Sans">Z</text><path d="M1436 74h14l-7 18z" fill="#8ad828"/><path d="M1409 100l18 8-18 7.5z" fill="#444"/><path d="M1477 100l-19 8 19 7z" fill="#e8400a"/><path d="M1443 124l7.5 17.5h-15z" fill="#555"/><text x="1443" y="72" font-size="10" font-weight="bold" fill="#111" text-anchor="middle" font-family="Liberation Sans">Y</text><text x="1482.5" y="112" font-size="10" font-weight="bold" fill="#111" text-anchor="middle" font-family="Liberation Sans">X</text></g></svg>
<div class="t" style="left:267.0px;top:72.10px;font-size:20.2px;color:#000;transform:scaleX(1.273);transform-origin:0 0;-webkit-text-stroke:0.35px #000;">Period 01: Q2/Jun/01 - 00.0%</div>
<div class="t" style="left:267.0px;top:98.90px;font-size:20.2px;color:#000;transform:scaleX(1.317);transform-origin:0 0;-webkit-text-stroke:0.35px #000;">2025/06/01 06:00:00</div>
<div class="t" style="left:260.2px;top:865.03px;font-size:8px;color:#2a2a2a;font-weight:bold;letter-spacing:0.72px;">200 fps | 5.000 ms/f</div>
<div class="a" style="left:1014px;top:864px;width:479px;height:10px;background:rgba(236,236,236,0.92)"></div>
<div class="t" style="left:1018.5px;top:864.83px;font-size:8px;color:#2a2a2a;font-weight:bold;letter-spacing:0.6px;">NVIDIA Corporation NVIDIA RTX 3500 Ada Generation Laptop GPU/PCIe/SSE2 | OpenGL v4.6.0 NVIDIA 573.40</div>
<div class="a" style="left:254px;top:880px;width:1242px;height:28px;background:#ebecf0;border:1px solid #c9cbd2;border-radius:2px"></div>
<div class="t" style="left:257.0px;top:889.43px;font-size:11.3px;color:#1b1b3a;">(2834.8, 1800.2, 779.9)</div>
<div class="a" style="left:1460px;top:883px;width:33px;height:22px;background:linear-gradient(#f6f7f9,#e6e7eb);border:1px solid #b8bbc4;border-radius:3px"></div>
<svg class="a" style="left:1463px;top:886px" width="28" height="17" viewBox="0 0 28 17"><circle cx="8" cy="7" r="6" fill="#5aa0d8" stroke="#3a7a3a" stroke-width="0.8"/><path d="M4 4c2 0 3 2 5 1s2 3 0 4" fill="#6ac04a"/><ellipse cx="11" cy="12" rx="5" ry="3.5" fill="#fff" stroke="#2a3f8a"/><circle cx="11" cy="12" r="1.8" fill="#2a3f8a"/><path d="M19 8h6l-3 3z" fill="#777"/></svg>
<div class="a" style="left:1500px;top:24px;width:414px;height:884px;background:#ebecf0;border:1px solid #9da1ab"></div>
<div class="a" style="left:1501px;top:25px;width:412px;height:19px;background:#e2e3e7"></div>
<div class="t" style="left:1506.7px;top:29.18px;font-size:11.6px;color:#5c616c;font-weight:bold;">Reserves Legend</div>
<svg class="a" style="left:1895px;top:29px" width="11" height="12" viewBox="0 0 11 12"><path d="M3 1.5h5M2 7h7M5.5 7v4.5" stroke="#6e717c" stroke-width="1.5" fill="none"/><rect x="3.8" y="1.5" width="3.4" height="5.5" fill="#7a7d88"/></svg>
<div class="a" style="left:1506px;top:51px;width:402px;height:20px;background:#fff;border:1px solid #b9bcc5"></div>
<div class="a" style="left:1891px;top:52px;width:16px;height:18px;background:linear-gradient(#f0f1f4,#e2e4e9);border-left:1px solid #c9ccd3"></div>
<div class="t" style="left:1510.5px;top:55px;font-size:11.7px;font-weight:bold;color:#7d7d7d">Reserves Shading: <span style="color:#0a8a1a">&lt;Period Shading: Periods_Weekly&gt;</span></div>
<svg class="a" style="left:1895px;top:58px" width="8" height="5"><path d="M0 0h8L4 5z" fill="#1b1b2e"/></svg>
<div class="a" style="left:1507px;top:72px;width:401px;height:545px;border:1px solid #d0d2d8;border-radius:3px"></div>
<div class="a" style="left:1509px;top:590px;width:396px;height:19px;background:#fff;border:1px solid #b9bcc5"></div>
<div class="a" style="left:1700px;top:612px;width:14px;height:2px;background:repeating-linear-gradient(90deg,#8a8d96 0 1px,transparent 1px 2px)"></div>
<div class="a" style="left:1506px;top:70px;width:402px;height:524px;background:#e4e5e9;border:1px solid #a7abb5;box-shadow:2px 2px 2px rgba(40,42,50,0.55)"></div>
<div class="a" style="left:1520px;top:83px;width:308px;height:19px;background:#fff;border:1px solid #b4b7c0"></div>
<div class="t" style="left:1523.0px;top:87.52px;font-size:11.2px;color:#9a9ba3;">Enter text to search...</div>
<div class="a" style="left:1835px;top:83px;width:60px;height:20px;background:linear-gradient(#f6f7f9,#e5e6ea);border:1px solid #a4a7b0;border-radius:2px"></div>
<div class="t" style="left:1851.0px;top:88.20px;font-size:10.4px;color:#1b1b3a;">Clear</div>
<div class="a" style="left:1507px;top:116px;width:400px;height:20px;background:#eeeff2;border-top:1px solid #c9cbd2;border-bottom:1px solid #c9cbd2"></div>
<div class="a" style="left:1889px;top:116px;width:1px;height:20px;background:#c9cbd2"></div>
<div class="t" style="left:1510.5px;top:120.53px;font-size:10.6px;color:#1b1b3a;">Reserves Shading</div>
<div class="a" style="left:1507px;top:136px;width:400px;height:435px;background:#fff"></div>
<div class="a" style="left:1507px;top:136px;width:382px;height:19px;background:#fff;border-bottom:1px solid #d9dae0"></div>
<div class="t" style="left:1511.6px;top:139.88px;font-size:11.95px;color:#9a0a0a;font-weight:bold;">&lt;Depletion Direction&gt;</div>
<div class="a" style="left:1507px;top:155px;width:382px;height:19px;background:#fff;border-bottom:1px solid #d9dae0"></div>
<div class="t" style="left:1511.6px;top:158.88px;font-size:11.95px;color:#0a8a1a;font-weight:bold;">&lt;Gantt Sequence Bar Shading&gt;</div>
<div class="a" style="left:1507px;top:174px;width:382px;height:19px;background:#fff;border-bottom:1px solid #d9dae0"></div>
<div class="t" style="left:1511.6px;top:177.88px;font-size:11.95px;color:#0a8a1a;font-weight:bold;">&lt;Period Shading&gt;</div>
<div class="a" style="left:1507px;top:193px;width:382px;height:19px;background:#e3e8f5;border-bottom:1px solid #d9dae0"></div>
<div class="t" style="left:1511.6px;top:196.88px;font-size:11.95px;color:#0a8a1a;font-weight:bold;">&lt;Period Shading: Periods_Weekly&gt;</div>
<div class="a" style="left:1507px;top:212px;width:382px;height:19px;background:#fff;border-bottom:1px solid #d9dae0"></div>
<div class="t" style="left:1511.6px;top:215.88px;font-size:11.95px;color:#0a0ae0;font-weight:bold;">&lt;JiT Delays&gt;</div>
<div class="a" style="left:1507px;top:231px;width:382px;height:19px;background:#fff;border-bottom:1px solid #d9dae0"></div>
<div class="t" style="left:1511.6px;top:234.88px;font-size:11.95px;color:#0a0ae0;font-weight:bold;">&lt;JiT Dependencies&gt;</div>
<div class="a" style="left:1507px;top:250px;width:382px;height:19px;background:#fff;border-bottom:1px solid #d9dae0"></div>
<div class="t" style="left:1511.6px;top:253.88px;font-size:11.95px;color:#0a0ae0;font-weight:bold;">&lt;JiT Dependencies: DrillingToBlasting&gt;</div>
<div class="a" style="left:1507px;top:269px;width:382px;height:19px;background:#fff;border-bottom:1px solid #d9dae0"></div>
<div class="t" style="left:1511.6px;top:272.88px;font-size:11.95px;color:#0a0ae0;font-weight:bold;">&lt;JiT Destinations&gt;</div>
<div class="a" style="left:1507px;top:288px;width:382px;height:19px;background:#fff;border-bottom:1px solid #d9dae0"></div>
<div class="t" style="left:1511.6px;top:291.88px;font-size:11.95px;color:#0a0ae0;font-weight:bold;">&lt;JiT Destinations: &lt;Imported&gt;&gt;</div>
<div class="a" style="left:1507px;top:307px;width:382px;height:19px;background:#fff;border-bottom:1px solid #d9dae0"></div>
<div class="t" style="left:1511.6px;top:310.88px;font-size:11.95px;color:#0a0ae0;font-weight:bold;">&lt;JiT Destinations: &lt;Custom Overrides&gt;&gt;</div>
<div class="a" style="left:1507px;top:326px;width:382px;height:19px;background:#fff;border-bottom:1px solid #d9dae0"></div>
<div class="t" style="left:1511.6px;top:329.88px;font-size:11.95px;color:#18b8ee;font-weight:bold;">&lt;By Bench/Flitch&gt;</div>
<div class="a" style="left:1507px;top:345px;width:382px;height:19px;background:#fff;border-bottom:1px solid #d9dae0"></div>
<div class="t" style="left:1511.6px;top:348.88px;font-size:11.95px;color:#f5a20a;font-weight:bold;">Fe [&lt;All Items&gt;]</div>
<div class="a" style="left:1507px;top:364px;width:382px;height:19px;background:#fff;border-bottom:1px solid #d9dae0"></div>
<div class="t" style="left:1511.6px;top:367.88px;font-size:11.95px;color:#f5a20a;font-weight:bold;">Test</div>
<div class="a" style="left:1507px;top:383px;width:382px;height:19px;background:#fff;border-bottom:1px solid #d9dae0"></div>
<div class="t" style="left:1510.5px;top:388.20px;font-size:10.4px;color:#1b1b2e;">Level_Reserves_Name</div>
<div class="a" style="left:1507px;top:402px;width:382px;height:19px;background:#fff;border-bottom:1px solid #d9dae0"></div>
<div class="t" style="left:1510.5px;top:407.20px;font-size:10.4px;color:#1b1b2e;">Level_Mine_Name</div>
<div class="a" style="left:1507px;top:421px;width:382px;height:19px;background:#fff;border-bottom:1px solid #d9dae0"></div>
<div class="t" style="left:1510.5px;top:426.20px;font-size:10.4px;color:#1b1b2e;">Level_Pit_Name</div>
<div class="a" style="left:1507px;top:440px;width:382px;height:19px;background:#fff;border-bottom:1px solid #d9dae0"></div>
<div class="t" style="left:1510.5px;top:445.20px;font-size:10.4px;color:#1b1b2e;">Level_Stage_Name</div>
<div class="a" style="left:1507px;top:459px;width:382px;height:19px;background:#fff;border-bottom:1px solid #d9dae0"></div>
<div class="t" style="left:1510.5px;top:464.20px;font-size:10.4px;color:#1b1b2e;">Level_Bench_Name</div>
<div class="a" style="left:1507px;top:478px;width:382px;height:19px;background:#fff;border-bottom:1px solid #d9dae0"></div>
<div class="t" style="left:1510.5px;top:483.20px;font-size:10.4px;color:#1b1b2e;">Level_Blast_Name</div>
<div class="a" style="left:1507px;top:497px;width:382px;height:19px;background:#fff;border-bottom:1px solid #d9dae0"></div>
<div class="t" style="left:1510.5px;top:502.20px;font-size:10.4px;color:#1b1b2e;">Level_Flitch_Name</div>
<div class="a" style="left:1507px;top:516px;width:382px;height:19px;background:#fff;border-bottom:1px solid #d9dae0"></div>
<div class="t" style="left:1510.5px;top:521.20px;font-size:10.4px;color:#1b1b2e;">Level_Dig_Name</div>
<div class="a" style="left:1507px;top:535px;width:382px;height:19px;background:#fff;border-bottom:1px solid #d9dae0"></div>
<div class="t" style="left:1510.5px;top:540.20px;font-size:10.4px;color:#1b1b2e;">BlastSolid_mine [&lt;All Items&gt;]</div>
<div class="a" style="left:1507px;top:554px;width:382px;height:19px;background:#fff;border-bottom:1px solid #d9dae0"></div>
<div class="t" style="left:1510.5px;top:559.20px;font-size:10.4px;color:#1b1b2e;">BlastSolid_pit [&lt;All Items&gt;]</div>
<div class="a" style="left:1889px;top:136px;width:18px;height:435px;background:#f3f4f7;border-left:1px solid #e2e3e8"></div>
<svg class="a" style="left:1894px;top:141px" width="8" height="5"><path d="M0 5h8L4 0z" fill="#a8abb3"/></svg>
<svg class="a" style="left:1894px;top:560px" width="8" height="5"><path d="M0 0h8L4 5z" fill="#a8abb3"/></svg>
<div class="a" style="left:1895px;top:153px;width:7px;height:92px;background:#f4f5f7;border:1px solid #a9acb4;border-radius:3px"></div>
<div class="a" style="left:1503.5px;top:190.5px;width:333.0px;height:26.5px;border:3px solid #e2101a;border-radius:6px"></div>
<div class="a" style="left:1507px;top:571px;width:400px;height:22px;background:#e9eaee"></div>
<svg class="a" style="left:1508px;top:580px" width="10" height="10"><path d="M1 1l8 8M1 5l4 4" stroke="#8a8d96" stroke-width="0.8"/></svg>
<svg class="a" style="left:1888px;top:577px" width="10" height="10" viewBox="0 0 10 10"><path d="M1.5 1.5l7 7M8.5 1.5l-7 7" stroke="#111" stroke-width="2.2"/></svg>
<div class="a" style="left:1507px;top:622px;width:401px;height:251px;border:1px solid #d0d2d8;border-radius:3px"></div>
<div class="t" style="left:1508.5px;top:625.70px;font-size:10.75px;color:#1b1b3a;">Other</div>
<div class="a" style="left:1509px;top:640px;width:396px;height:232px;background:#fff;border:1px solid #b4b7c0"></div>
<div class="a" style="left:1510px;top:641px;width:394px;height:21px;background:#ebecf0;border-bottom:1px solid #d0d2d8"></div>
<div class="a" style="left:1512px;top:642px;width:32px;height:18px;background:#dcdcdc"></div>
<div class="a" style="left:1544px;top:641px;width:1px;height:21px;background:#d0d2d8"></div>
<div class="t" style="left:1548.4px;top:645.94px;font-size:10.7px;color:#1b1b3a;">Untouched</div>
<div class="a" style="left:1501px;top:880px;width:412px;height:27px;background:linear-gradient(#dcdde2,#e6e7eb 40%,#e9eaee)"></div>
<div class="a" style="left:1556px;top:880px;width:96px;height:27px;background:#ebecf0"></div>
<div class="t" style="left:1514.3px;top:887.03px;font-size:10.6px;color:#1b1b3a;">Data</div>
<div class="t" style="left:1560.4px;top:887.03px;font-size:10.6px;color:#1b1b3a;">Reserves Legend</div>
<div class="t" style="left:1666.4px;top:888.28px;font-size:10.3px;color:#1b1b3a;">Dumps Legend</div>
<div class="t" style="left:1759.7px;top:887.03px;font-size:10.6px;color:#1b1b3a;">Layers</div>
<div class="a" style="left:1552.5px;top:870.5px;width:102.0px;height:39.0px;border:3px solid #e2101a;border-radius:7px"></div>
<div class="a" style="left:7.5px;top:912px;width:62.5px;height:19px;background:linear-gradient(#e9eaee,#dfe0e5);border:1px solid #c4c7ce;border-bottom:none"></div>
<div class="t" style="left:14.0px;top:916.78px;font-size:10.3px;color:#1b1b3a;">JiT Delays</div>
<div class="a" style="left:71px;top:912px;width:97px;height:19px;background:linear-gradient(#e9eaee,#dfe0e5);border:1px solid #c4c7ce;border-bottom:none"></div>
<div class="t" style="left:78.0px;top:916.78px;font-size:10.3px;color:#1b1b3a;">JiT Dependencies</div>
<div class="a" style="left:170px;top:912px;width:89.5px;height:19px;background:linear-gradient(#e9eaee,#dfe0e5);border:1px solid #c4c7ce;border-bottom:none"></div>
<div class="t" style="left:176.6px;top:916.78px;font-size:10.3px;color:#1b1b3a;">JiT Destinations</div>
<div class="a" style="left:4px;top:931px;width:1910px;height:96px;background:#ebecf0;border:1px solid #9da1ab"></div>
<div class="a" style="left:5px;top:932px;width:1908px;height:19px;background:#e2e3e7"></div>
<div class="t" style="left:10.3px;top:937.23px;font-size:11.9px;color:#a3a8b3;font-weight:bold;">Time</div>
<div class="a" style="left:8px;top:954px;width:84px;height:68px;border:1px solid #d3d5db;border-radius:3px"></div>
<div class="a" style="left:11.5px;top:957.5px;width:77.0px;height:21.5px;background:linear-gradient(#f6f7f9,#e7e8ec);border:1px solid #b3b6bf;border-radius:3px"></div>
<div class="a" style="left:11.5px;top:983.5px;width:77.0px;height:36.0px;background:linear-gradient(#f6f7f9,#e7e8ec);border:1px solid #b3b6bf;border-radius:3px"></div>
<svg class="a" style="left:15px;top:959px" width="17" height="17" viewBox="0 0 17 17"><path d="M1 5h10l2 2v9H1z" fill="#1e3a6a"/><rect x="4" y="5.5" width="5" height="3" fill="#c8d4e8"/><rect x="3" y="11.5" width="8" height="4.5" fill="#f4f6fa"/><path d="M6 5h5V1.5l5 4.5-5 4.5V7H6z" fill="#7ad23a" stroke="#3a8a1a" stroke-width="0.8"/></svg>
<div class="t" style="left:35.2px;top:962.99px;font-size:11px;color:#1b1b3a;">Exports</div>
<svg class="a" style="left:77px;top:966px" width="7" height="4"><path d="M0 0h7L3.5 4z" fill="#8a8d96"/></svg>
<svg class="a" style="left:16px;top:994px" width="15" height="15" viewBox="0 0 15 15"><rect x="0.7" y="0.7" width="8" height="8" rx="1" fill="#fff" stroke="#5a6aa8" stroke-width="1.2"/><rect x="2" y="2" width="2.2" height="2.2" fill="#e0b810"/><rect x="5" y="2" width="2.2" height="2.2" fill="#f05a20"/><rect x="2" y="5" width="2.2" height="2.2" fill="#f5a010"/><rect x="5.7" y="5.7" width="8.6" height="8.6" rx="1" fill="#fff" stroke="#4a5a9a" stroke-width="1.2"/><rect x="7.3" y="7.3" width="2.2" height="2.2" fill="#6a9ae8"/><rect x="10.5" y="7.3" width="2.2" height="2.2" fill="#3a9ae8"/><rect x="7.3" y="10.5" width="2.2" height="2.2" fill="#30a8b0"/><rect x="10.5" y="10.5" width="2.2" height="2.2" fill="#60a020"/></svg>
<div class="t" style="left:36.0px;top:997.19px;font-size:11px;color:#1b1b3a;">Display</div>
<svg class="a" style="left:77px;top:1000px" width="7" height="4"><path d="M0 0h7L3.5 4z" fill="#8a8d96"/></svg>
<div class="a" style="left:96px;top:953px;width:1814px;height:28px;border:1px solid #d3d5db;border-radius:3px"></div>
<div class="a" style="left:99.5px;top:957.5px;width:23.200000000000003px;height:21.5px;background:linear-gradient(#f6f7f9,#e7e8ec);border:1px solid #b3b6bf;border-radius:3px"></div>
<svg class="a" style="left:101.5px;top:958px" width="20" height="20" viewBox="0 0 20 20"><circle cx="9.75" cy="9.5" r="7" fill="#f8f8f8" stroke="#a8abb2"/><path d="M6.5 6v7M13 6l-5.5 3.5L13 13z" stroke="#8a8a8a" stroke-width="1.4" fill="#8a8a8a"/></svg>
<div class="a" style="left:127.4px;top:957.5px;width:23.19999999999999px;height:21.5px;background:linear-gradient(#f6f7f9,#e7e8ec);border:1px solid #b3b6bf;border-radius:3px"></div>
<svg class="a" style="left:129.4px;top:958px" width="20" height="20" viewBox="0 0 20 20"><circle cx="9.75" cy="9.5" r="7" fill="#f8f8f8" stroke="#a8abb2"/><path d="M9.5 6L5 9.5 9.5 13zM14 6L9.5 9.5 14 13z" fill="#8a8a8a"/></svg>
<div class="a" style="left:155.4px;top:957.5px;width:23.19999999999999px;height:21.5px;background:linear-gradient(#f6f7f9,#e7e8ec);border:1px solid #b3b6bf;border-radius:3px"></div>
<svg class="a" style="left:157.4px;top:958px" width="20" height="20" viewBox="0 0 20 20"><circle cx="9.75" cy="9.5" r="7" fill="#f8f8f8" stroke="#a8abb2"/><path d="M7.5 6l6 3.5-6 3.5z" fill="#8a8a8a"/></svg>
<div class="a" style="left:183.3px;top:957.5px;width:23.19999999999999px;height:21.5px;background:linear-gradient(#f6f7f9,#e7e8ec);border:1px solid #b3b6bf;border-radius:3px"></div>
<svg class="a" style="left:185.3px;top:958px" width="20" height="20" viewBox="0 0 20 20"><circle cx="9.75" cy="9.5" r="7" fill="#f8f8f8" stroke="#a8abb2"/><path d="M5.5 6L10 9.5 5.5 13zM10 6l4.5 3.5L10 13z" fill="#8a8a8a"/></svg>
<div class="a" style="left:211px;top:957.5px;width:23.30000000000001px;height:21.5px;background:linear-gradient(#f6f7f9,#e7e8ec);border:1px solid #b3b6bf;border-radius:3px"></div>
<svg class="a" style="left:213.0px;top:958px" width="20" height="20" viewBox="0 0 20 20"><circle cx="9.75" cy="9.5" r="7" fill="#f8f8f8" stroke="#a8abb2"/><path d="M13 6v7M6.5 6l5.5 3.5L6.5 13z" stroke="#8a8a8a" stroke-width="1.4" fill="#8a8a8a"/></svg>
<div class="a" style="left:239.3px;top:957.5px;width:33.19999999999999px;height:21.5px;background:linear-gradient(#f6f7f9,#e7e8ec);border:1px solid #b3b6bf;border-radius:3px"></div>
<svg class="a" style="left:241.3px;top:958px" width="20" height="20" viewBox="0 0 20 20"><circle cx="9.75" cy="9.5" r="7" fill="#f8f8f8" stroke="#a8abb2"/><path d="M8 5v9M11 5v9" stroke="#8a8a8a" stroke-width="1.3"/><circle cx="8" cy="8" r="1.6" fill="#fff" stroke="#8a8a8a"/><circle cx="11" cy="11" r="1.6" fill="#fff" stroke="#8a8a8a"/></svg>
<svg class="a" style="left:261px;top:966px" width="7" height="4"><path d="M0 0h7L3.5 4z" fill="#8a8d96"/></svg>
<div class="t" style="left:923.0px;top:962.65px;font-size:11.4px;color:#1b1b3a;">1: Q2/Jun/01 (+0.0%) | 2025/06/01 06:00:00</div>
<div class="a" style="left:1797px;top:957.5px;width:110px;height:21.5px;background:linear-gradient(#f6f7f9,#e7e8ec);border:1px solid #c0c3ca;border-radius:3px"></div>
<div class="a" style="left:1801px;top:960.5px;width:15px;height:15.0px;background:#4343f2;border:1px solid #2a2a9a"></div>
<div class="t" style="left:1825.3px;top:963.12px;font-size:11.2px;color:#1b1b3a;">1: Q2/Jun/01</div>
<svg class="a" style="left:1895px;top:966px" width="7" height="4"><path d="M0 0h7L3.5 4z" fill="#8a8d96"/></svg>
<div class="a" style="left:108px;top:999px;width:1790px;height:1px;background:#dfe0e5"></div>
<svg class="a" style="left:102px;top:992px" width="13" height="17" viewBox="0 0 13 17"><path d="M1.5 1.5h10v10l-5 5-5-5z" fill="linear-gradient" /><path d="M1.5 1.5h10v10l-5 5-5-5z" fill="#f4f5f7" stroke="#8a8d96"/></svg>
<svg class="a" style="left:0;top:0" width="1918" height="1031"><rect x="108.00" y="1011" width="64.21" height="4.5" fill="#3f3ff6"/><rect x="171.91" y="1011" width="64.21" height="4.5" fill="#3d58f6"/><rect x="235.83" y="1011" width="64.21" height="4.5" fill="#3b70f6"/><rect x="299.74" y="1011" width="64.21" height="4.5" fill="#398af7"/><rect x="363.66" y="1011" width="64.21" height="4.5" fill="#36a4f7"/><rect x="427.57" y="1011" width="64.21" height="4.5" fill="#34bff7"/><rect x="491.49" y="1011" width="64.21" height="4.5" fill="#32dbf8"/><rect x="555.40" y="1011" width="64.21" height="4.5" fill="#2ff8f8"/><rect x="619.31" y="1011" width="64.21" height="4.5" fill="#2df8db"/><rect x="683.23" y="1011" width="64.21" height="4.5" fill="#2bf9be"/><rect x="747.14" y="1011" width="64.21" height="4.5" fill="#28f99f"/><rect x="811.06" y="1011" width="64.21" height="4.5" fill="#26f981"/><rect x="874.97" y="1011" width="64.21" height="4.5" fill="#24fa61"/><rect x="938.89" y="1011" width="64.21" height="4.5" fill="#21fa40"/><rect x="1002.80" y="1011" width="64.21" height="4.5" fill="#1ffa1f"/><rect x="1066.71" y="1011" width="64.21" height="4.5" fill="#3cfb1d"/><rect x="1130.63" y="1011" width="64.21" height="4.5" fill="#5afb1a"/><rect x="1194.54" y="1011" width="64.21" height="4.5" fill="#79fb18"/><rect x="1258.46" y="1011" width="64.21" height="4.5" fill="#99fc15"/><rect x="1322.37" y="1011" width="64.21" height="4.5" fill="#b9fc13"/><rect x="1386.29" y="1011" width="64.21" height="4.5" fill="#dbfc11"/><rect x="1450.20" y="1011" width="64.21" height="4.5" fill="#fdfd0e"/><rect x="1514.11" y="1011" width="64.21" height="4.5" fill="#fdda0c"/><rect x="1578.03" y="1011" width="64.21" height="4.5" fill="#fdb709"/><rect x="1641.94" y="1011" width="64.21" height="4.5" fill="#fe9407"/><rect x="1705.86" y="1011" width="64.21" height="4.5" fill="#fe6f04"/><rect x="1769.77" y="1011" width="64.21" height="4.5" fill="#fe4a02"/><rect x="1833.69" y="1011" width="64.21" height="4.5" fill="#ff2400"/><rect x="107.50" y="1009" width="1" height="8" fill="#222"/><rect x="171.41" y="1009" width="1" height="8" fill="#222"/><rect x="235.33" y="1009" width="1" height="8" fill="#222"/><rect x="299.24" y="1009" width="1" height="8" fill="#222"/><rect x="363.16" y="1009" width="1" height="8" fill="#222"/><rect x="427.07" y="1009" width="1" height="8" fill="#222"/><rect x="490.99" y="1009" width="1" height="8" fill="#222"/><rect x="554.90" y="1009" width="1" height="8" fill="#222"/><rect x="618.81" y="1009" width="1" height="8" fill="#222"/><rect x="682.73" y="1009" width="1" height="8" fill="#222"/><rect x="746.64" y="1009" width="1" height="8" fill="#222"/><rect x="810.56" y="1009" width="1" height="8" fill="#222"/><rect x="874.47" y="1009" width="1" height="8" fill="#222"/><rect x="938.39" y="1009" width="1" height="8" fill="#222"/><rect x="1002.30" y="1009" width="1" height="8" fill="#222"/><rect x="1066.21" y="1009" width="1" height="8" fill="#222"/><rect x="1130.13" y="1009" width="1" height="8" fill="#222"/><rect x="1194.04" y="1009" width="1" height="8" fill="#222"/><rect x="1257.96" y="1009" width="1" height="8" fill="#222"/><rect x="1321.87" y="1009" width="1" height="8" fill="#222"/><rect x="1385.79" y="1009" width="1" height="8" fill="#222"/><rect x="1449.70" y="1009" width="1" height="8" fill="#222"/><rect x="1513.61" y="1009" width="1" height="8" fill="#222"/><rect x="1577.53" y="1009" width="1" height="8" fill="#222"/><rect x="1641.44" y="1009" width="1" height="8" fill="#222"/><rect x="1705.36" y="1009" width="1" height="8" fill="#222"/><rect x="1769.27" y="1009" width="1" height="8" fill="#222"/><rect x="1833.19" y="1009" width="1" height="8" fill="#222"/><rect x="1897.10" y="1009" width="1" height="8" fill="#222"/></svg>
</body></html>
